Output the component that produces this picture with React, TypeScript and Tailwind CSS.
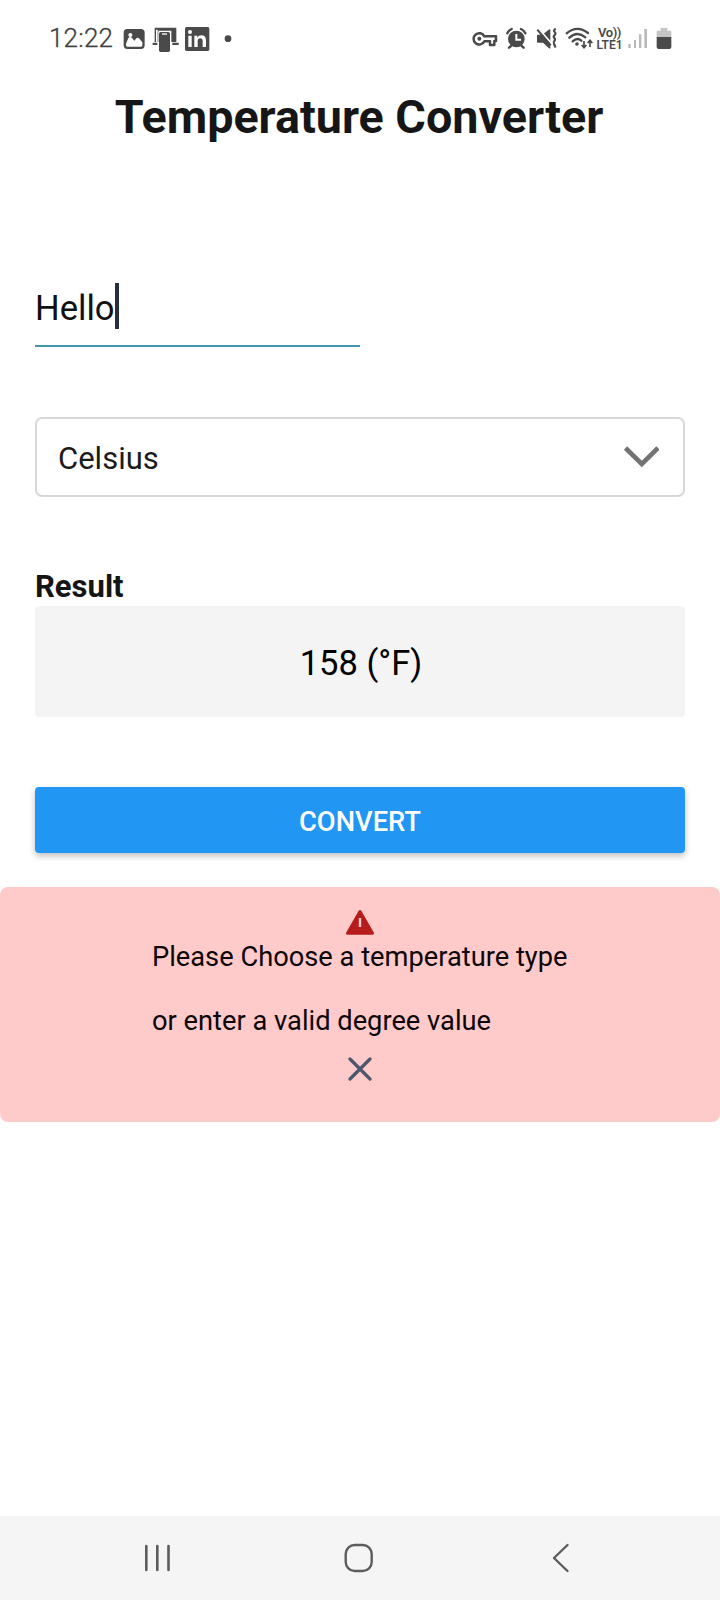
import React from "react";

const INK = "#4a4a4a";

function Glyph({ x, w, className, children }: { x: number; w: number; className: string; children: React.ReactNode }) {
  return (
    <svg viewBox={`${x} 0 ${w} 180`} className={`h-[60px] shrink-0 ${className}`} fill={INK}>
      {children}
    </svg>
  );
}

function StatusBar() {
  return (
    <header className="flex h-[70px] items-start justify-between pt-[10px] pl-[49px] pr-[48px]">
      <div className="flex h-[60px] items-start">
        <span className="w-[71px] pt-[13px] text-[26px] leading-[30px] font-light tracking-[0.2px] text-[#3f3f3f] [-webkit-text-stroke:0.3px_#3f3f3f]">12:22</span>
        <Glyph x={270} w={90} className="w-[30px]">
          <path fillRule="evenodd" d="M292 57h41q11 0 11 11v38q0 11-11 11h-41q-11 0-11-11V68q0-11 11-11Zm-4 44v5q0 4 4 4h41q4 0 4-4v-9l-10-12q-4-4-8 0l-6 7-9-10q-5-3-9 2Zm13-32a6 6 0 1 0 .1 0Z" />
        </Glyph>
        <Glyph x={360} w={96} className="w-[32px]">
          <path d="M374 53h65v43h-15V62h-39v34h-11Z" />
          <path d="M378 59h5v37h-5Z" fill="#fff" />
          <path d="M368 98h14v7h-14ZM427 98h19v7h-19Z" />
          <rect x="387" y="66" width="33" height="60" rx="5" />
          <path d="M396 72h15" stroke="#fff" strokeWidth="4" />
        </Glyph>
        <Glyph x={456} w={90} className="w-[30px]">
          <rect x="465" y="51" width="73" height="72" rx="5" />
          <path d="M475 77h10v34h-10ZM493 77h9v6q3-7 12-7 14 0 14 16v19h-10V94q0-9-7-9-8 0-8 9v17h-10Z" fill="#fff" />
          <circle cx="480" cy="66" r="6" fill="#fff" />
        </Glyph>
        <Glyph x={546} w={90} className="w-[30px]">
          <circle cx="594" cy="86" r="10" />
        </Glyph>
      </div>
      <div className="flex h-[60px] items-start">
        <Glyph x={27} w={99} className="w-[33px]">
          <path d="M73 79h35v14h-5v12H90V94H73a17 17 0 1 1 0-15Z" fill="none" stroke={INK} strokeWidth="7.500" strokeLinejoin="round" />
          <circle cx="58" cy="86" r="6" />
        </Glyph>
        <Glyph x={126} w={90} className="w-[30px]">
          <circle cx="169" cy="87" r="25" />
          <path d="M142 70q4-9 13-13M183 57q9 4 13 13M153 108l-6 5M185 108l6 5" fill="none" stroke={INK} strokeWidth="7" strokeLinecap="round" />
          <path d="M169 72v17h14" fill="none" stroke="#fff" strokeWidth="6" />
        </Glyph>
        <Glyph x={216} w={87} className="w-[29px]">
          <path d="M233 74h14l19-15q5-4 5 2v52q0 5-5 1l-17-16h-16q-2 0-2-3V77q0-3 2-3Z" />
          <path d="M235 55l40 46" stroke="#fff" strokeWidth="5" />
          <path d="M232 59l40 47" stroke={INK} strokeWidth="6" />
          <path d="M287 56q-8 6-3 10t0 9-1 9 0 9-1 9 4 11" fill="none" stroke={INK} strokeWidth="6.500" />
        </Glyph>
        <Glyph x={303} w={102} className="w-[34px]">
          <path d="M320 70Q351 44 384 69M328 83Q352 62 376 82M338 94Q352 81 364 92" fill="none" stroke={INK} strokeWidth="7" strokeLinecap="round" />
          <circle cx="351" cy="102" r="5.500" />
          <path d="M372 93v18M365 105l7 8 7-8M390 111V93M383 99l7-8 7 8" fill="none" stroke={INK} strokeWidth="5" />
        </Glyph>
        <div className="flex w-[29px] flex-col items-center pt-[17px] text-[#4a4a4a]">
          <span className="text-[13px] leading-[12px] font-semibold tracking-[-0.4px]">Vo))</span>
          <span className="text-[12px] leading-[12px] font-semibold">LTE1</span>
        </div>
        <Glyph x={493} w={84} className="w-[28px]">
          <path d="M506 102h7v12h-7ZM523 90h6v24h-6ZM538 73h7v41h-7ZM554 57h8v57h-8Z" fill="#b9b9b9" />
        </Glyph>
        <Glyph x={577} w={60} className="w-[20px]">
          <path d="M603 54h20v8h8q4 0 4 4v18h-44V66q0-4 4-4h8Z" fill="#c4c4c4" />
          <path d="M591 81h44v30q0 6-6 6h-32q-6 0-6-6Z" />
        </Glyph>
      </div>
    </header>
  );
}

export default function App() {
  return (
    <div className="flex h-[1600px] w-[720px] flex-col overflow-hidden bg-white font-['Roboto',sans-serif] text-black">
      <StatusBar />
      <h1 className="mt-[17px] h-[59px] pr-[2px] text-center text-[46.7px] leading-[60px] font-bold whitespace-nowrap text-[#161616]">Temperature Converter</h1>

      <main className="flex flex-col px-[35px]">
        <div className="mt-[124px] flex h-[77px] w-[325px] items-start border-b-2 border-[#4297ae] pt-[13px]">
          <span className="h-[46px] w-[80px] pt-[3px] text-[34.6px] leading-[44px] text-[#111]">Hello</span>
          <span className="h-[46px] w-[3.5px] bg-[#272f3b]" />
        </div>

        <div className="mt-[70px] flex h-[80px] items-center justify-between rounded-[7px] border-2 border-[#d8d8d8] pl-[21px] pr-[24px]">
          <span className="pt-[4px] text-[31px] text-[#1b1b1b]">Celsius</span>
          <svg viewBox="0 0 36 24" className="h-[24px] w-[36px]" fill="none" stroke="#737373" strokeWidth="4.6">
            <path d="M2.500 3 18.800 19 35 3" />
          </svg>
        </div>

        <h2 className="mt-[70px] h-[39px] text-[31px] leading-[40px] font-bold text-[#151515]">Result</h2>
        <div className="flex h-[111px] items-center justify-center rounded-[4px] bg-[#f4f4f4] pt-[4px] pl-[2px] text-[34.5px]">158 (°F)</div>

        <button className="mt-[70px] h-[66px] rounded-[4px] bg-[#2196f3] pt-[4px] text-[27.300px] font-medium text-white shadow-[0_3px_6px_rgba(0,0,0,0.25)]">CONVERT</button>
      </main>

      <section className="mt-[34px] flex h-[235px] flex-col items-center rounded-[8px] bg-[#ffcaca] pt-[21px]">
        <svg viewBox="0 0 30 28" className="h-[28px] w-[30px]">
          <path d="M15 3.500 27.500 25.200H2.500Z" fill="#b71c1c" stroke="#b71c1c" strokeWidth="3" strokeLinejoin="round" />
          <path d="M15 10v9" stroke="#ffcaca" strokeWidth="2.4" />
        </svg>
        <p className="-mt-[11px] w-[416px] text-[27.280px] leading-[64px] whitespace-nowrap text-[#0d0505]">
          Please Choose a temperature type
          <br />
          or enter a valid degree value
        </p>
        <svg viewBox="0 0 24 24" className="mt-[4px] h-[24px] w-[24px]" fill="none" stroke="#4e566b" strokeWidth="3.2" strokeLinecap="round">
          <path d="M2 2 22 22M22 2 2 22" />
        </svg>
      </section>

      <nav className="mt-auto flex h-[84px] items-center bg-[#f5f5f5] pl-[144px]">
        <svg viewBox="0 0 28 30" className="h-[30px] w-[28px]" stroke="#5c5c5c" strokeWidth="2.6" strokeLinecap="round">
          <path d="M2.3 3v24M13.3 3v24M24.5 3v24" />
        </svg>
        <svg viewBox="0 0 30 30" className="ml-[172px] h-[30px] w-[30px]" fill="none" stroke="#5c5c5c" strokeWidth="2.4">
          <rect x="1.700" y="2" width="26" height="26" rx="9" />
        </svg>
        <svg viewBox="0 0 18 30" className="ml-[178px] h-[30px] w-[18px]" fill="none" stroke="#5c5c5c" strokeWidth="2.4" strokeLinecap="round" strokeLinejoin="round">
          <path d="M15.500 2 2 15 15.500 28" />
        </svg>
      </nav>
    </div>
  );
}
